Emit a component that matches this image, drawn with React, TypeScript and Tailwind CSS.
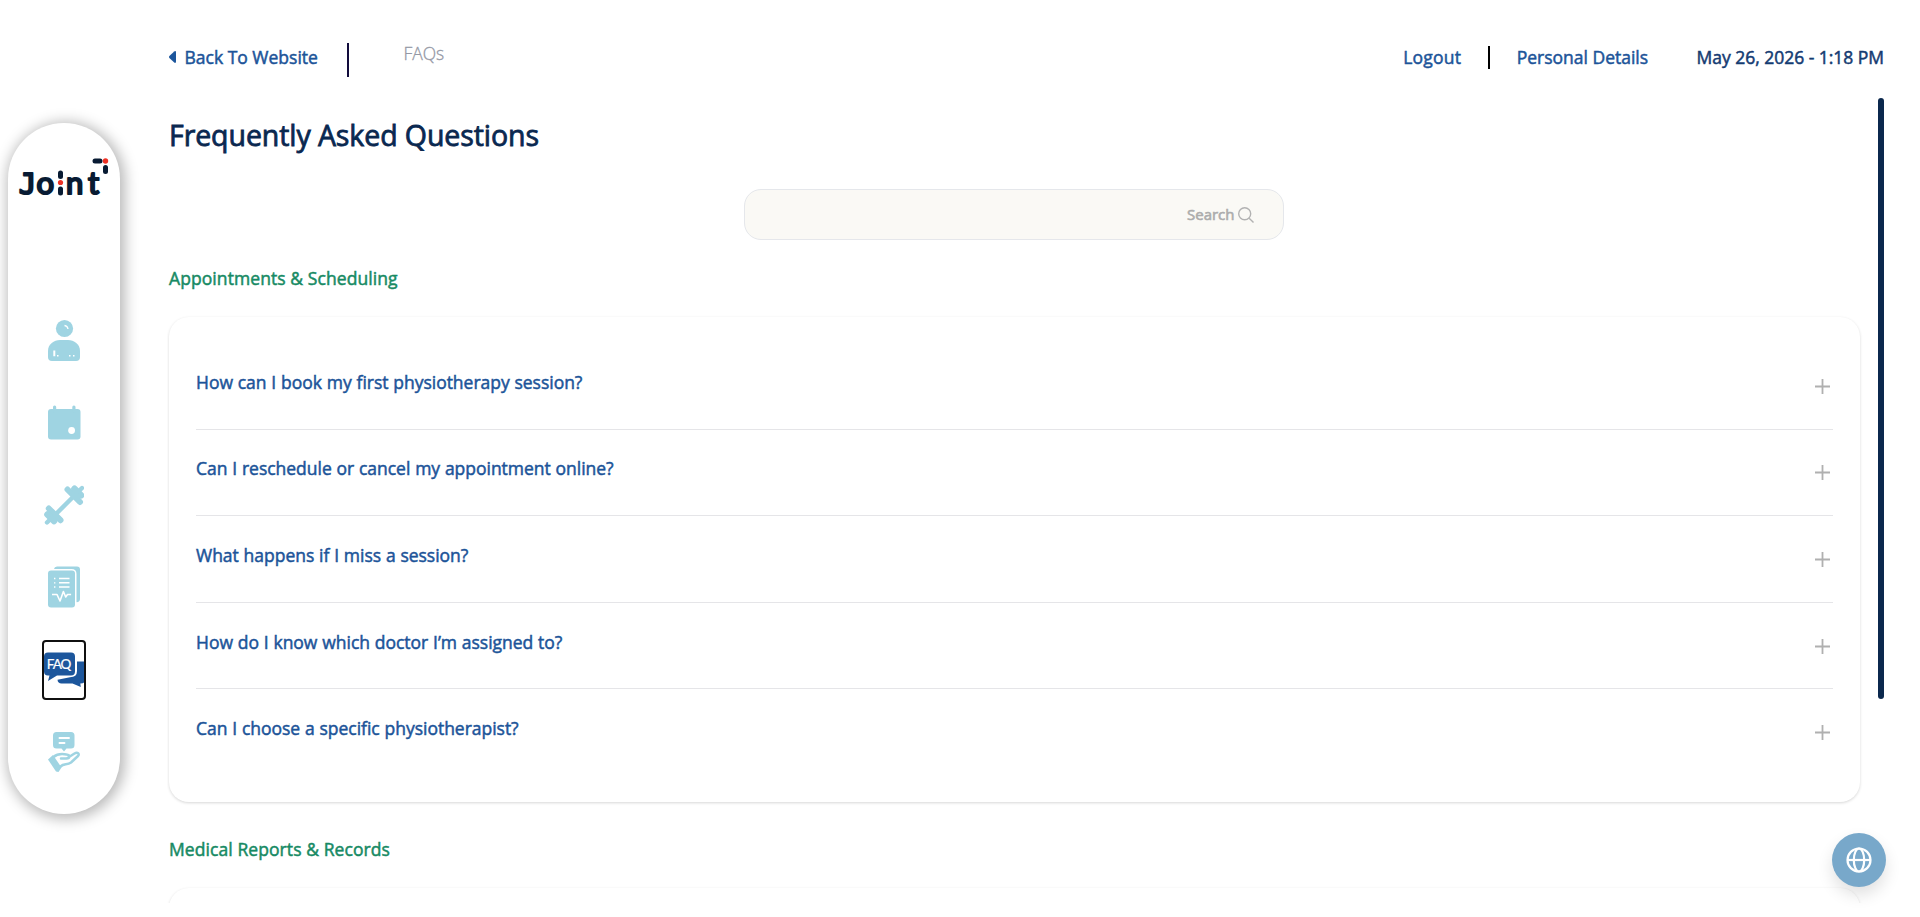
import React, { useState } from 'react';

type FaqSection = {
    title: string;
    questions: string[];
};

const sections: FaqSection[] = [
    {
        title: 'Appointments & Scheduling',
        questions: [
            'How can I book my first physiotherapy session?',
            'Can I reschedule or cancel my appointment online?',
            'What happens if I miss a session?',
            'How do I know which doctor I’m assigned to?',
            'Can I choose a specific physiotherapist?',
        ],
    },
    {
        title: 'Medical Reports & Records',
        questions: [],
    },
];

function Logo() {
    return (
        <svg width="92" height="42" viewBox="0 0 92 42" className="block overflow-visible">
            <g fill="#081b33" stroke="#081b33" strokeWidth="2.2" strokeLinejoin="round">
                <text x="0.8" y="35.5" fontSize="29" fontFamily='"DejaVu Sans Mono", monospace'>J</text>
                <g fontFamily='Lato, sans-serif'>
                    <text x="18.5" y="35.7" fontSize="31">o</text>
                    <text x="48" y="35.7" fontSize="31">n</text>
                    <text x="70" y="35.7" fontSize="31">t</text>
                </g>
            </g>
            <g fill="#081b33">
                <rect x="40" y="12.5" width="5" height="8.5" rx="2.5" />
                <rect x="40" y="28.5" width="5" height="9" rx="2.5" />
                <rect x="74.5" y="0.5" width="10" height="5" rx="2.5" />
                <rect x="85" y="7" width="5" height="9" rx="2.5" />
            </g>
            <circle cx="42.5" cy="24.5" r="2.6" fill="#ee3124" />
            <circle cx="87.5" cy="3" r="2.7" fill="#ee3124" />
        </svg>
    );
}

function UserIcon() {
    return (
        <svg width="40" height="44" viewBox="0 1 40 44" fill="#9fd4e2">
            <circle cx="20.5" cy="10.5" r="8.6" />
            <path d="M4 37v-4C4 26 10 22 16 22h8c6 0 12 4 12 11v6q0 4-4 4H8q-4 0-4-4z" />
            <path d="M20.5 7.5q3 .3 3.5 3.5" fill="none" stroke="#fff" strokeWidth="1.3" />
            <path d="M9.3 32.5v5.8h2v-5.8zM13 37h1.5v1.5H13zM25 37h1.5v1.5h-1.5zM29 37h1.5v1.5h-1.5z" fill="#fff" />
        </svg>
    );
}

function CalendarIcon() {
    return (
        <svg width="40" height="44" viewBox="0 1 40 44" fill="#9fd4e2">
            <rect x="4" y="9" width="32.5" height="30.5" rx="3" />
            <rect x="9" y="5.5" width="3.2" height="7" rx="1.5" />
            <rect x="28.3" y="5.5" width="3.2" height="7" rx="1.5" />
            <circle cx="27.6" cy="30.5" r="3.4" fill="#fff" />
        </svg>
    );
}

function DumbbellIcon() {
    return (
        <svg width="40" height="44" viewBox="0 1 40 44" fill="none" stroke="#9fd4e2" strokeLinecap="round">
            <path d="M11 32 30 13" strokeWidth="4.4" />
            <path d="M23.5 6.5 36 19M4.8 25.5 16.5 37.2" strokeWidth="6" />
            <path d="M30.5 5.8 37 12.3M3.5 31.5 10 38" strokeWidth="6.6" />
            <path d="m34.5 8.5 3.5-3.5M3 39.5l4-4" strokeWidth="4.4" />
        </svg>
    );
}

function ReportIcon() {
    return (
        <svg width="40" height="44" viewBox="0 1 40 44" fill="#9fd4e2">
            <path d="M10 4q.4-2.5 3-2.5h20q3 0 3 3V34q0 3-3.5 3.2V9q0-5-5-5z" />
            <rect x="4" y="5.5" width="27" height="37" rx="3" />
            <g stroke="#fff" fill="none">
                <path d="M10 13.5h1.4M10 17.8h1.4M10 22h1.4" strokeWidth="1.3" />
                <path d="M15 13.5h10.5M15 17.8h10.5M15 22h10.5" strokeWidth="1.6" />
                <path d="M8 29.5h5l3 6.5 3.4-9.5 2.3 5.5 1.8-2.5h3.6" strokeWidth="1.6" strokeLinejoin="round" />
            </g>
        </svg>
    );
}

function FaqIcon() {
    return (
        <svg width="40" height="36" viewBox="0 1 40 36" fill="#1c569c" className="overflow-visible">
            <path d="M33 10.5h7v21q-.8 1-3.7 1l.5 3.500-8.300-3.500H17.500q-3.600 0-4-3.800L26 26.200q7 0 7-6.200z" />
            <path d="M4 1.5h23q4 0 4 4v15q0 4-4 4H13L4 30l1.500-5.500H4q-4 0-4-4v-15q0-4 4-4z" />
            <text x="2.8" y="17.5" fill="#fff" fontFamily='Lato, sans-serif' fontSize="13.5" textLength="24.5"
                  stroke="#fff" strokeWidth=".2">FAQ</text>
        </svg>
    );
}

function FeedbackIcon() {
    return (
        <svg width="40" height="44" viewBox="0 0 40 44" fill="#9fd4e2">
            <path d="M12.5 2h14.5q3.5 0 3.5 3.500V15q0 3.500-3.500 3.500h-4.500L20 21.500l-2.500-3h-5Q9 18.500 9 15V5.500Q9 2 12.500 2z" />
            <path d="M15.5 8h9.5M15.5 13h5" stroke="#fff" strokeWidth="1.9" strokeLinecap="round" />
            <path d="m4 29.5 5-4.500 8.500 12.500-3 4.500-2.500-.5z" />
            <path d="M9.5 27c4-3.500 8-3.500 13-2.500 4 .5 3.500 4 0 4H17M23 28.300l7.500-4.800c3-1.800 5.500.2 3.500 2.500l-7 6.500c-4 3-7 .5-10.500 4" fill="none"
                  stroke="#9fd4e2" strokeWidth="2.5" strokeLinecap="round" strokeLinejoin="round" />
        </svg>
    );
}

const navItems = [
    { label: 'Profile', Icon: UserIcon },
    { label: 'Calendar', Icon: CalendarIcon },
    { label: 'Exercises', Icon: DumbbellIcon },
    { label: 'Reports', Icon: ReportIcon },
    { label: 'FAQ', Icon: FaqIcon },
    { label: 'Feedback', Icon: FeedbackIcon },
];

function Sidebar() {
    const [active, setActive] = useState('FAQ');

    return (
        <aside className="ml-2 mt-[123px] flex h-[691px] w-28 shrink-0 flex-col items-center rounded-[56px] bg-white pt-[35px] shadow-[2px_2px_14px_3px_rgba(0,0,0,0.28)]">
            <Logo />
            <nav className="mt-[111px] flex flex-col items-center gap-[22.3px]">
                {navItems.map(({ label, Icon }) => (
                    <button key={label} aria-label={label} onClick={() => setActive(label)}
                            className={`flex h-[60px] w-11 items-center justify-center rounded border-2 ${active === label ? 'border-[#101010]' : 'border-transparent'}`}>
                        <Icon />
                    </button>
                ))}
            </nav>
        </aside>
    );
}

function Header() {
    return (
        <header className="flex h-[98px] items-start justify-between pt-[43px] pl-0.5 text-[17.5px] leading-7 text-[#1c5499]">
            <div className="flex items-start">
                <a href="#" className="flex items-center [-webkit-text-stroke:0.5px]">
                    <svg width="7" height="12" viewBox="0 0 7 12" fill="#1c569c" className="mr-[8.5px]">
                        <path d="M.4 5 5.2.4Q7-.5 7 1.5v9q0 2-1.800 1.100L.4 7q-.8-1 0-2z" />
                    </svg>
                    Back To Website
                </a>
                <div className="ml-[29.5px] h-[34px] w-0.5 bg-[#120c3c]" />
                <span className="-mt-1 ml-[54px] font-light text-[#9498a5] [-webkit-text-stroke:0.3px]">FAQs</span>
            </div>
            <div className="flex [-webkit-text-stroke:0.5px]">
                <a href="#" className="tracking-[0.2px]">Logout</a>
                <div className="mt-[3px] ml-[27px] h-[23px] w-0.5 bg-black" />
                <a href="#" className="ml-[26.5px]">Personal Details</a>
                <span className="ml-[48.5px] tracking-[-0.03px] text-[#143b72]">May 26, 2026 - 1:18 PM</span>
            </div>
        </header>
    );
}

function FaqRow({ question }: { question: string }) {
    return (
        <div className="flex h-[86.6px] items-start justify-between border-b border-[#e5e5e8] pt-[24.8px] last:border-b-0">
            <h3 className="text-[17.5px] leading-7 tracking-[-0.02px] [word-spacing:0.3px] text-[#1c5499] [-webkit-text-stroke:0.5px]">{question}</h3>
            <svg width="15" height="15" viewBox="0 0 15 15" className="mt-[11px] mr-[3px]" stroke="#b0b0b0" strokeWidth="1.8">
                <path d="M0 7.5h15M7.5 0v15" />
            </svg>
        </div>
    );
}

export default function App() {
    return (
        <div className="flex h-[917px] overflow-hidden bg-white font-['Open_Sans',sans-serif]">
            <Sidebar />
            <main className="ml-[47px] w-[1717px]">
                <Header />
                <div className="flex h-[805px] justify-between overflow-hidden">
                    <div className="w-[1695px] px-0.5">
                        <h1 className="mt-[17px] text-[28.5px] leading-10 tracking-[-0.08px] text-[#0a2850] [-webkit-text-stroke:0.8px]">
                            Frequently Asked Questions
                        </h1>
                        <div className="mt-[34px] ml-[575px] flex h-[51px] w-[540px] items-center justify-end rounded-[17px] border border-[#e5e7eb] bg-[#faf9f5] pr-[29px] text-[#acacac]">
                            <span className="text-[15px] [-webkit-text-stroke:0.6px]">Search</span>
                            <svg width="16" height="16" viewBox="0 0 16 16" fill="none" stroke="#b2b2b2" strokeWidth="1.4" className="ml-[3.5px]">
                                <circle cx="6.7" cy="6.8" r="6" />
                                <path d="m11.2 11.2 4.3 4.3" />
                            </svg>
                        </div>
                        {sections.map((section, i) => (
                            <section key={section.title} className={i === 0 ? 'mt-6' : 'mt-[33px]'}>
                                <h2 className="text-[17.5px] leading-7 tracking-[0.08px] text-[#178a64] [-webkit-text-stroke:0.5px]">
                                    {section.title}
                                </h2>
                                <div className="mt-[25px] min-h-[140px] rounded-[20px] bg-white px-[27px] py-[26px] shadow-[0_1px_3px_rgba(0,0,0,0.16)]">
                                    {section.questions.map((q) => <FaqRow key={q} question={q} />)}
                                </div>
                            </section>
                        ))}
                    </div>
                    {/* scroll thumb */}
                    <div className="h-[601px] w-1.5 rounded-full bg-[#0b284d]" />
                </div>
            </main>
            <button aria-label="Change language"
                    className="fixed right-[34px] bottom-[30px] flex h-[54px] w-[54px] items-center justify-center rounded-full bg-[#78a8ca] shadow-[0_8px_16px_rgba(0,0,0,0.12)]">
                <svg width="26" height="26" viewBox="0 0 26 26" fill="none" stroke="#fff" strokeWidth="2.2">
                    <circle cx="13" cy="13" r="11.5" />
                    <ellipse cx="13" cy="13" rx="5.2" ry="11.5" />
                    <path d="M1.5 13h23" />
                </svg>
            </button>
        </div>
    );
}
